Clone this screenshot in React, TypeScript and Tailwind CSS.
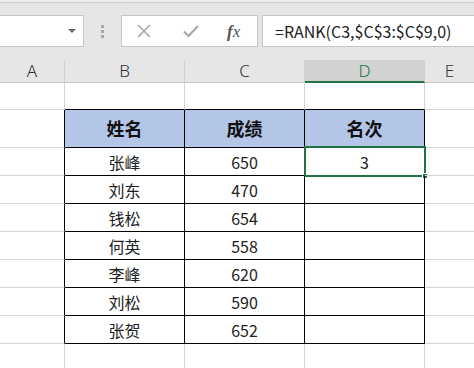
import React from "react";

const cols = [65, 120, 120, 120];
const rows: [string, string][] = [
  ["张峰", "650"],
  ["刘东", "470"],
  ["钱松", "654"],
  ["何英", "558"],
  ["李峰", "620"],
  ["刘松", "590"],
  ["张贺", "652"],
];

const cjk = { fontFamily: '"Noto Sans CJK SC", "Noto Sans", sans-serif' };

function Cell({
  w,
  h,
  r,
  b,
  className = "",
  children,
}: {
  w?: number;
  h: number;
  r: string;
  b: string;
  className?: string;
  children?: React.ReactNode;
}) {
  return (
    <div
      className={`relative flex items-center justify-center border-r border-b ${r} ${b} ${className} ${
        w ? "" : "flex-1"
      }`}
      style={w ? { width: w, height: h } : { height: h }}
    >
      {children}
    </div>
  );
}

export default function App() {
  const G = "border-r-[#d4d4d4]";
  const GB = "border-b-[#d4d4d4]";
  const K = "border-r-black";
  const KB = "border-b-black";
  return (
    <div className="w-[474px] h-[368px] overflow-hidden bg-white text-[#222]" style={cjk}>
      {/* toolbar */}
      <div className="h-[60px] bg-[#e6e6e6] relative">
        <div className="h-[3px] bg-[#ededed] border-b border-[#cfcfcf]" />
        <div className="flex items-center mt-[12px] h-[32px]">
          <div className="w-[84px] h-[32px] bg-white border border-l-0 border-[#c6c6c6] flex items-center justify-end pr-[6px]">
            <div className="w-0 h-0 border-l-[4px] border-r-[4px] border-t-[4px] border-l-transparent border-r-transparent border-t-[#666] mr-[1px]" />
          </div>
          <div className="w-[37px] flex flex-col items-center gap-[2px]">
            <div className="w-[3px] h-[3px] bg-[#a6a6a6]" />
            <div className="w-[3px] h-[3px] bg-[#a6a6a6]" />
            <div className="w-[3px] h-[3px] bg-[#a6a6a6]" />
          </div>
          <div className="w-[137px] h-[32px] bg-white border border-[#c6c6c6] flex items-center">
            <svg width="14" height="14" viewBox="0 0 14 14" className="ml-[15px]">
              <path d="M1 1 L13 13 M13 1 L1 13" stroke="#a8a8a8" strokeWidth="1.6" />
            </svg>
            <svg width="16" height="14" viewBox="0 0 16 14" className="ml-[32px]">
              <path d="M1 7.5 L5.5 12 L15 2" stroke="#a8a8a8" strokeWidth="2.2" fill="none" />
            </svg>
            <span
              className="ml-[28px] text-[17px] italic text-[#555] leading-none"
              style={{ fontFamily: '"Liberation Serif", serif' }}
            >
              <span className="font-bold">f</span>x
            </span>
          </div>
          <div className="ml-[4px] flex-1 h-[32px] bg-white border border-r-0 border-[#c6c6c6] flex items-center pl-[12px] text-[16px] text-[#222]">
            =RANK(C3,$C$3:$C$9,0)
          </div>
        </div>
      </div>
      {/* column headers */}
      <div className="flex h-[23px] bg-[#e6e6e6] text-[17px] text-[#333]" style={{ fontFamily: '"Noto Sans", sans-serif' }}>
        {["A", "B", "C"].map((c, i) => (
          <div
            key={c}
            className="flex items-center justify-center border-r border-b border-r-[#d0d0d0] border-b-[#c6c6c6] font-light"
            style={{ width: cols[i], height: 23 }}
          >
            {c}
          </div>
        ))}
        <div
          className="flex items-center justify-center bg-[#d2d2d2] border-b-2 border-b-[#217346] border-r border-r-[#d0d0d0] text-[#217346] font-light"
          style={{ width: cols[3], height: 23 }}
        >
          D
        </div>
        <div className="flex-1 flex items-center justify-center border-b border-b-[#c6c6c6] font-light">E</div>
      </div>
      {/* row 1 */}
      <div className="flex">
        <Cell w={65} h={27} r={G} b={GB} />
        <Cell w={120} h={27} r={G} b={KB} />
        <Cell w={120} h={27} r={G} b={KB} />
        <Cell w={120} h={27} r={G} b={KB} />
        <Cell h={27} r="border-r-0" b={GB} />
      </div>
      {/* header */}
      <div className="flex text-[18px] font-bold text-[#111]">
        <Cell w={65} h={38} r={K} b={GB} />
        <Cell w={120} h={38} r={K} b={KB} className="bg-[#b4c6e7]">姓名</Cell>
        <Cell w={120} h={38} r={K} b={KB} className="bg-[#b4c6e7]">成绩</Cell>
        <Cell w={120} h={38} r={K} b={KB} className="bg-[#b4c6e7]">名次</Cell>
        <Cell h={38} r="border-r-0" b={GB} />
      </div>
      {rows.map(([n, s], i) => (
        <div key={n} className="flex text-[16px] text-[#222]">
          <Cell w={65} h={28} r={K} b={GB} />
          <Cell w={120} h={28} r={K} b={KB}>{n}</Cell>
          <Cell w={120} h={28} r={K} b={KB}>{s}</Cell>
          <Cell w={120} h={28} r={K} b={KB}>
            {i === 0 ? "3" : null}
            {i === 0 && (
              <div className="absolute -top-[2px] -left-[1px] -right-[2px] -bottom-[2px] border-2 border-[#217346] pointer-events-none">
                <div className="absolute -right-[4px] -bottom-[4px] w-[6px] h-[6px] bg-[#217346] border border-white" />
              </div>
            )}
          </Cell>
          <Cell h={28} r="border-r-0" b={GB} />
        </div>
      ))}
      <div className="flex">
        <Cell w={65} h={40} r={G} b="border-b-0" />
        <Cell w={120} h={40} r={G} b="border-b-0" />
        <Cell w={120} h={40} r={G} b="border-b-0" />
        <Cell w={120} h={40} r={G} b="border-b-0" />
        <Cell h={40} r="border-r-0" b="border-b-0" />
      </div>
    </div>
  );
}
